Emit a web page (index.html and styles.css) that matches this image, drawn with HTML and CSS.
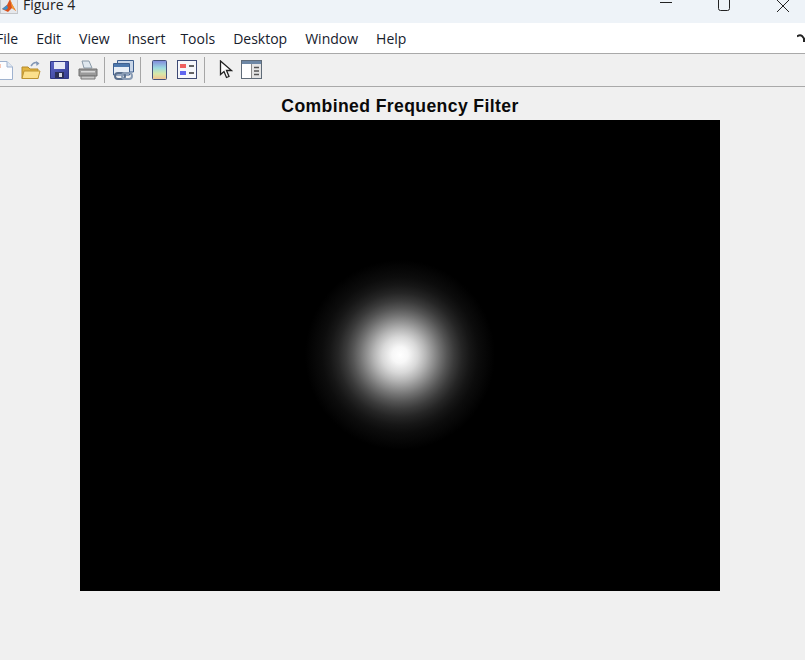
FILE: index.html
```html
<!DOCTYPE html>
<html lang="en">
<head>
<meta charset="UTF-8" />
<title>Figure 4</title>
<link rel="stylesheet" href="styles.css">
</head>
<body>

<div class="titlebar">
  <div class="title-left">
    <svg class="app-icon" width="18" height="18" viewBox="0 0 18 18">
      <rect x=".5" y="0" width="17" height="17.500" fill="#e6e8ec" stroke="#c4c6ca"/>
      <path d="M2 13 L7 9 L10 3 L12 8 L16 15 L12 12 L8 16 Z" fill="#d9501c"/>
      <path d="M2 13 L7 9 L8 12 L6 14 Z" fill="#3f8fcc"/>
      <path d="M10 3 L12 8 L16 15 L12 12 Z" fill="#f29a30"/>
    </svg>
    <span class="fig-name">Figure 4</span>
  </div>
  <div class="win-buttons">
    <svg width="12" height="12" viewBox="0 0 12 12"><path d="M0 2.500H12" stroke="#222" fill="none"/></svg>
    <svg width="12" height="12" viewBox="0 0 12 12"><path d="M.5 0V8.500Q.5 10.500 2.500 10.500H9.500Q11.500 10.500 11.500 8.500V0" stroke="#222" fill="none"/></svg>
    <svg width="14" height="14" viewBox="0 0 14 14"><path d="M1 0L13 12M13 0L1 12" stroke="#222" fill="none"/></svg>
  </div>
</div>

<div class="menubar">
  <span>File</span>
  <span>Edit</span>
  <span>View</span>
  <span>Insert</span>
  <span class="menu-tools">Tools</span>
  <span>Desktop</span>
  <span>Window</span>
  <span>Help</span>
  <svg class="dock" width="8" height="8" viewBox="0 0 8 8"><path d="M0 2.500Q3 .5 5 2L7 4.500V8" stroke="#222" stroke-width="2" fill="none"/></svg>
</div>

<div class="toolbar">
  <svg class="ico-new" width="17" height="21" viewBox="0 0 17 21">
    <path d="M.5 1.500H11L16.500 7V19.500H.5Z" fill="#fdfdff" stroke="#9fb2cf"/>
    <path d="M11 1.500V7H16.500" fill="#dfe7f2" stroke="#9fb2cf"/>
    <rect x="1" y="4" width="4" height="4" fill="#f6c8b8"/>
  </svg>
  <svg class="ico-open" width="20" height="20" viewBox="0 0 20 20">
    <path d="M1 7H7L9 9H17V18.500H1Z" fill="#e2b440" stroke="#b58a2a"/>
    <path d="M3 11H19L17 18.500H1Z" fill="#fce08c" stroke="#bd9330"/>
    <path d="M10 6Q13 1 17 3" stroke="#8397b5" stroke-width="1.500" fill="none"/>
    <path d="M15 1L18.500 3.500L15.500 6Z" fill="#8397b5"/>
  </svg>
  <svg class="ico-save" width="19" height="20" viewBox="0 0 19 20">
    <defs>
      <linearGradient id="disk" x1="0" y1="0" x2="1" y2="1">
        <stop offset="0" stop-color="#5c66c8"/>
        <stop offset="1" stop-color="#343c90"/>
      </linearGradient>
    </defs>
    <path d="M.5 1.500H18.500V18.500H.5Z" fill="url(#disk)" stroke="#2f3785"/>
    <rect x="4" y="2" width="11" height="7" fill="#e6e9f6"/>
    <rect x="5" y="12" width="9" height="6" fill="#2b2f55"/>
    <rect x="9" y="13" width="3" height="4" fill="#d8dae6"/>
  </svg>
  <svg class="ico-print" width="20" height="20" viewBox="0 0 20 20">
    <path d="M4 1H11L14 8H6Z" fill="#dfe7ee" stroke="#8a9aa8"/>
    <path d="M1 9H19V16H1Z" fill="#9a9a9a" stroke="#6e6e6e"/>
    <path d="M3 16H17V19H3Z" fill="#c9c9c9" stroke="#777"/>
    <rect x="3" y="11" width="14" height="1.500" fill="#d8d8d8"/>
  </svg>
  <i class="sep sep-a"></i>
  <svg class="ico-link" width="21" height="21" viewBox="0 0 21 21">
    <path d="M4.500 .5H20.500V12H4.500Z" fill="#c9d6e8" stroke="#3e5f8f"/>
    <path d="M.5 3.500H16.500V15H.5Z" fill="#e8eef6" stroke="#3e5f8f"/>
    <rect x="1" y="4" width="15" height="3" fill="#4d78ad"/>
    <rect x="2" y="13" width="10" height="6" rx="3" fill="none" stroke="#5a6f8c" stroke-width="2"/>
    <rect x="9" y="13" width="10" height="6" rx="3" fill="none" stroke="#8a9cb5" stroke-width="2"/>
  </svg>
  <i class="sep sep-b"></i>
  <svg class="ico-bar" width="15" height="20" viewBox="0 0 15 20">
    <defs>
      <linearGradient id="cbar" x1="0" y1="0" x2="0" y2="1">
        <stop offset="0" stop-color="#8088dc"/>
        <stop offset=".4" stop-color="#9cdce0"/>
        <stop offset=".7" stop-color="#d8e8a8"/>
        <stop offset="1" stop-color="#f6c090"/>
      </linearGradient>
    </defs>
    <rect x=".5" y=".5" width="14" height="19" rx="1" fill="url(#cbar)" stroke="#45527a"/>
  </svg>
  <svg class="ico-legend" width="20" height="20" viewBox="0 0 20 20">
    <rect x=".5" y=".5" width="19" height="18" fill="#f6f7fb" stroke="#3e4a75"/>
    <rect x="3" y="4" width="6" height="4" fill="#ef6060"/>
    <rect x="3" y="11" width="6" height="4" fill="#6066ef"/>
    <path d="M12 6H17M12 13H17" stroke="#333" stroke-width="1.500"/>
  </svg>
  <i class="sep sep-c"></i>
  <svg class="ico-cursor" width="14" height="20" viewBox="0 0 14 20">
    <path d="M1.500 1V14.500L5 11.500L7.500 17.500L10 16.500L7.500 10.500H12.500Z" fill="#fff" stroke="#222" stroke-width="1.300"/>
  </svg>
  <svg class="ico-panel" width="21" height="20" viewBox="0 0 21 20">
    <rect x=".5" y=".5" width="20" height="18" fill="#e4e4e4" stroke="#5f6b78"/>
    <rect x="1" y="1" width="19" height="3" fill="#6d87a5"/>
    <rect x="1" y="4" width="9" height="14" fill="#fff"/>
    <path d="M10.500 4V18" stroke="#8a8a8a"/>
    <path d="M13 7.500H18M13 11H18M13 14.500H18" stroke="#555" stroke-width="1.500"/>
  </svg>
</div>

<div class="figure">
  <h1 class="plot-title">Combined Frequency Filter</h1>
  <div class="axes"></div>
</div>

</body>
</html>
```

FILE: styles.css
```css
html, body {
  margin: 0;
  padding: 0;
}
body {
  width: 805px;
  height: 660px;
  overflow: hidden;
  background: #f0f0f0;
  font-family: "Open Sans", "Noto Sans", sans-serif;
  color: #111;
}
.titlebar {
  height: 23px;
  background: #eef3f8;
  display: flex;
  justify-content: space-between;
  overflow: hidden;
}
.title-left {
  display: flex;
  align-items: flex-end;
  height: 14px;
}
.app-icon {
  flex: none;
}
.fig-name {
  margin-left: 5px;
  font-size: 14px;
  line-height: 19px;
  color: #222;
}
.win-buttons {
  display: flex;
  align-items: flex-start;
  margin-right: 15px;
}
.win-buttons svg:nth-child(1) {
  margin-right: 46px;
}
.win-buttons svg:nth-child(2) {
  margin-right: 46px;
}
.menubar {
  height: 30px;
  background: #fff;
  border-bottom: 1px solid #a9a9a9;
  display: flex;
  align-items: center;
  gap: 18px;
  font-size: 14px;
  color: #16202c;
}
.menubar span:first-child {
  margin-left: -4px;
}
.menubar .menu-tools {
  margin-left: -3px;
}
.dock {
  margin-left: auto;
  margin-right: 0;
  margin-top: -1px;
}
.toolbar {
  height: 32px;
  background: #f0f0f0;
  border-bottom: 1px solid #a9a9a9;
  display: flex;
  align-items: center;
}
.toolbar svg {
  flex: none;
}
.sep {
  width: 1px;
  height: 26px;
  background: #a6a6a6;
  flex: none;
}
.ico-new { margin-left: -4px; }
.ico-open { margin-left: 8px; }
.ico-save { margin-left: 9px; }
.ico-print { margin-left: 9px; }
.sep-a { margin-left: 6px; }
.ico-link { margin-left: 8px; }
.sep-b { margin-left: 6px; }
.ico-bar { margin-left: 11px; }
.ico-legend { margin-left: 10px; }
.sep-c { margin-left: 7px; }
.ico-cursor { margin-left: 14px; }
.ico-panel { margin-left: 8px; }
.figure {
  display: flex;
  flex-direction: column;
  align-items: flex-start;
  padding-left: 80px;
}
.plot-title {
  width: 640px;
  margin: 0;
  height: 33px;
  line-height: 38px;
  text-align: center;
  font-family: "Liberation Sans", Arial, sans-serif;
  font-size: 17.6px;
  font-weight: bold;
  letter-spacing: .38px;
  color: #0a0a0a;
}
.axes {
  width: 640px;
  height: 471px;
  background-color: #000;
  background-image: radial-gradient(circle 95px at 320px 235px,
    #fff 0, #f7f7f7 8px, #d8d8d8 18px, #b5b5b5 26px, #939393 33px,
    #727272 40px, #545454 47px, #3b3b3b 54px, #252525 62px,
    #161616 70px, #0c0c0c 78px, #070707 85px, #000 95px);
}
```
